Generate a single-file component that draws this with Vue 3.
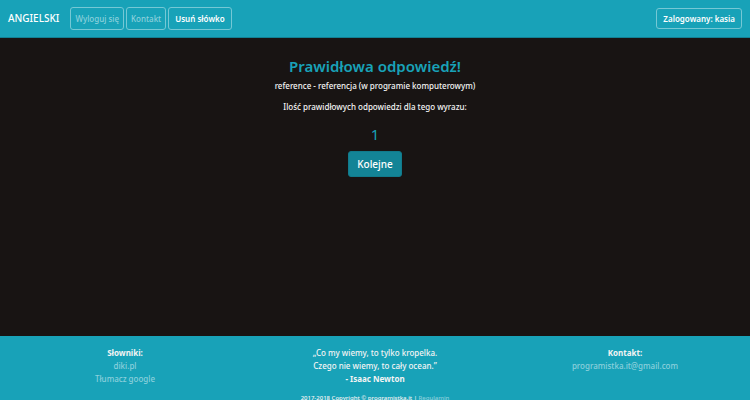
<script setup>
const word = 'reference - referencja (w programie komputerowym)'
const count = 1
const user = 'kasia'
</script>

<template>
  <div class="page">
    <header class="navbar">
      <a class="brand" href="#">ANGIELSKI</a>
      <nav class="links">
        <a class="nav-link" href="#">Wyloguj się</a>
        <a class="nav-link" href="#">Kontakt</a>
        <button class="nav-button" type="button">Usuń słówko</button>
      </nav>
      <button class="nav-button user" type="button">Zalogowany: {{ user }}</button>
    </header>

    <main class="content">
      <h1 class="title">Prawidłowa odpowiedź!</h1>
      <p class="text">{{ word }}</p>
      <p class="text">Ilość prawidłowych odpowiedzi dla tego wyrazu:</p>
      <p class="count">{{ count }}</p>
      <button class="next" type="button">Kolejne</button>
    </main>

    <footer class="footer">
      <div class="columns">
        <section>
          <strong>Słowniki:</strong>
          <a href="#">diki.pl</a>
          <a href="#">Tłumacz google</a>
        </section>
        <section>
          <span>„Co my wiemy, to tylko kropelka.</span>
          <span>Czego nie wiemy, to cały ocean.”</span>
          <strong>- Isaac Newton</strong>
        </section>
        <section>
          <strong>Kontakt:</strong>
          <a href="#">programistka.it@gmail.com</a>
        </section>
      </div>
      <p class="copyright">2017-2018 Copyright © programistka.it | <a href="#">Regulamin</a></p>
    </footer>
  </div>
</template>

<style>
body {
  margin: 0;
  background: #181413;
}
</style>

<style scoped>
.page {
  display: flex;
  flex-direction: column;
  height: 100vh;
  font-family: "Segoe UI", "Noto Sans", "Open Sans", sans-serif;
  font-size: 8px;
  line-height: 13px;
  color: #f4f4f4;
}

a {
  color: #8bd0dc;
  text-decoration: none;
}

button {
  font-family: inherit;
  color: #fff;
  cursor: pointer;
}

.navbar {
  display: flex;
  align-items: center;
  box-sizing: border-box;
  height: 38px;
  padding: 0 8px;
  background: #18a2b8;
  border-bottom: 1px solid #128194;
}

.brand {
  margin-right: 11px;
  font-size: 10px;
  font-weight: 500;
  color: #fff;
}

.links {
  display: flex;
  gap: 2px;
}

.nav-link,
.nav-button {
  box-sizing: border-box;
  height: 23px;
  border: 1px solid #75c8d5;
  border-radius: 3px;
  background: transparent;
  line-height: 21px;
  white-space: nowrap;
}

.nav-link {
  padding: 0 4px;
  font-weight: 500;
}

.nav-button {
  padding: 0 6px;
  font-size: 8px;
  font-weight: 600;
}

.user {
  height: 21px;
  margin-left: auto;
  line-height: 19px;
}

.content {
  display: flex;
  flex: 1;
  flex-direction: column;
  align-items: center;
  padding-top: 18px;
  text-align: center;
}

.title {
  margin: 0 0 3px;
  font-size: 15px;
  font-weight: 600;
  line-height: 20px;
  color: #18a2b8;
}

.text {
  margin: 0 0 8px;
  font-weight: 500;
}

.count {
  margin: 4px 0 8px;
  font-size: 15px;
  font-weight: 400;
  line-height: 18px;
  color: #18a2b8;
}

.next {
  padding: 0 8px;
  border: 1px solid #117a8b;
  border-radius: 3px;
  background: #138496;
  font-size: 10px;
  font-weight: 500;
  line-height: 24px;
}

.footer {
  box-sizing: border-box;
  flex: 0 0 64px;
  padding-top: 10px;
  overflow: hidden;
  background: #18a2b8;
  font-weight: 500;
  text-align: center;
}

.columns {
  display: grid;
  grid-template-columns: repeat(3, 1fr);
}

.columns section {
  display: flex;
  flex-direction: column;
  align-items: center;
}

.copyright {
  margin: 7px 0 0;
  font-size: 6px;
  font-weight: 500;
  line-height: 12px;
}
</style>
